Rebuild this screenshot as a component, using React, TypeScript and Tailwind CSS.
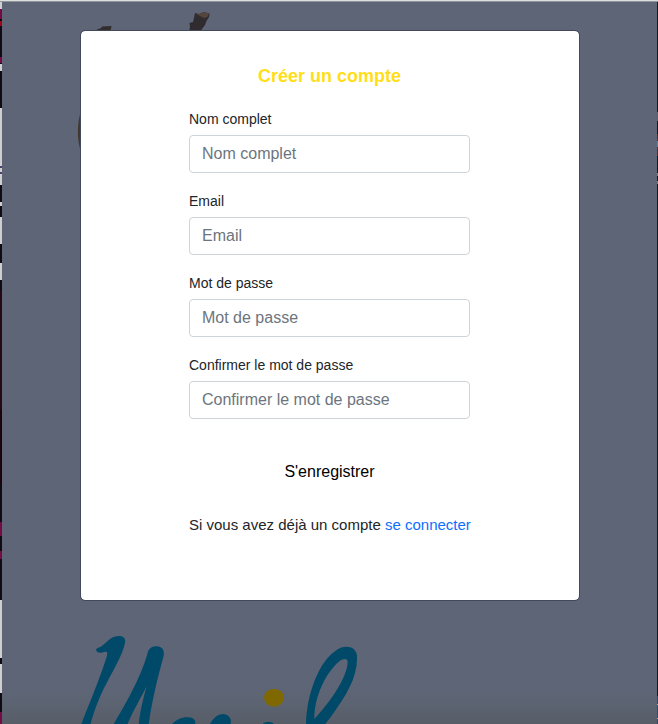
const fields = [
  { id: "name", label: "Nom complet", type: "text" },
  { id: "email", label: "Email", type: "email" },
  { id: "password", label: "Mot de passe", type: "password" },
  { id: "confirm", label: "Confirmer le mot de passe", type: "password" },
];

function Backdrop() {
  return (
    <svg className="absolute inset-0" width="658" height="724" viewBox="0 0 658 724" aria-hidden="true">
      <defs>
        <linearGradient id="shade" x1="0" y1="0" x2="0" y2="1">
          <stop offset="0" stopColor="#5b626c" stopOpacity="0" />
          <stop offset="1" stopColor="#575e68" />
        </linearGradient>
      </defs>
      <rect width="658" height="724" fill="#5e6577" />
      <rect y="685" width="658" height="39" fill="url(#shade)" />

      {/* antlers and body edge of the emblem */}
      <path d="M189 32 L190 27 L189.500 23 L193 22 L194 18 L195 13 L199 14 L204 12 L209.500 13.500 L209 17 L206.500 21 L205 25 L202 29 L200.500 32 Z" fill="#302b2e" />
      <path d="M196 14 L199 14 L204 12 L209 13.500 L207.500 17 L204 18 L200 16 Z" fill="#54463c" />
      <path d="M96 32 L97 29.500 L101 28 L102 26.500 L111.500 26 L111 29 L109 32 Z M114 32 L115 30 L123 30 L124 32 Z" fill="#332d2e" />
      <path d="M82 108 C77 120 76 141 82 154 Z" fill="#42382f" />

      {/* script lettering */}
      <g transform="translate(70 590) scale(.33333)">
        <g fill="#004968">
          <path d="M33 404 C60 336 89 266 109 204 C112 194 113 186 109 185 C100 184 94 191 84 187 C78 184 76 177 83 174 C106 168 117 138 146 138 C160 138 168 146 165 158 C158 198 118 258 91 318 C78 347 68 378 61 404 Z" />
          <path d="M130 404 C160 353 213 263 233 188 C237 173 248 169 260 169 C276 170 284 180 281 197 C264 260 246 330 236 404 L206 404 C210 365 220 323 230 289 C216 318 187 366 172 404 Z" />
          <path d="M304 404 C319 387 340 379 356 382 C371 383 379 392 375 404 Z" />
          <path d="M419 404 C430 381 447 372 460 372 C477 374 487 387 481 404 Z" />
          <path d="M578 404 C581 396 590 395 599 396 C607 397 611 399 612 404 Z" />
          <path fillRule="evenodd" d="M708 404 C710 315 745 215 800 180 C826 162 859 170 861 198 C864 260 830 314 785 377 L764 404 Z M733 387 C774 344 832 265 833 216 C833 204 820 205 808 214 C765 250 732 326 733 387 Z" />
        </g>
        <ellipse cx="612" cy="323" rx="30" ry="27" fill="#806800" />
      </g>

      {/* neighbouring content at the window edges */}
      <rect width="2" height="724" fill="#100b12" />
      <g fill="#cfcfd1">
        <rect width="2" height="9" />
        <rect y="64" width="2" height="7" />
        <rect y="108" width="2" height="77" />
        <rect y="202" width="2" height="4" />
        <rect y="217" width="2" height="27" />
        <rect y="263" width="2" height="17" />
        <rect y="600" width="2" height="58" />
        <rect y="664" width="2" height="29" />
      </g>
      <g fill="#750b43">
        <rect y="9" width="2" height="10" />
        <rect y="21" width="2" height="5" fill="#9b0712" />
        <rect y="57" width="2" height="6" />
        <rect y="522" width="2" height="14" />
        <rect y="551" width="2" height="8" />
        <rect y="712" width="2" height="12" />
      </g>
      <rect y="166" width="2" height="2" fill="#4c3d72" />
      <rect y="172" width="2" height="2" fill="#4c3d72" />
      <rect y="290" width="2" height="120" fill="#250815" />
      <rect y="410" width="2" height="74" fill="#1b030c" />
      <rect x="657" width="1" height="724" fill="#101820" />
      <g fill="#747b80">
        <rect x="657" y="112" width="1" height="9" fill="#596166" />
        <rect x="657" y="134" width="1" height="22" fill="#5e2b1a" />
        <rect x="657" y="141" width="1" height="6" />
        <rect x="657" y="173" width="1" height="3" />
        <rect x="657" y="181" width="1" height="3" />
      </g>
      <rect x="657" y="696" width="1" height="28" fill="#165486" />
      <rect x="657" y="704" width="1" height="1" fill="#a4b4c1" />
      <rect x="657" y="718" width="1" height="1" fill="#a4b4c1" />
      <rect width="658" height="1" fill="#dddede" />
      <rect y="1" width="658" height="1" fill="#8e959b" />
    </svg>
  );
}

export default function App() {
  return (
    <div className="relative h-[724px] w-[658px] overflow-hidden pl-20 pt-[30px] font-['Liberation_Sans',Arial,sans-serif] text-[#212529]">
      <Backdrop />
      <main className="relative h-[571px] w-[500px] rounded-[5px] border border-[#434958] bg-white bg-clip-padding pt-[31px] pr-[109px] pl-[108px]">
        <h1 className="text-center text-[18px] leading-7 font-bold text-[#ffde17]">Créer un compte</h1>
        <form>
          <div className="mt-[19px] flex flex-col gap-[18px]">
            {fields.map((field) => (
              <div key={field.id} className="flex flex-col">
                <label htmlFor={field.id} className="h-[26px] text-sm leading-[21px]">
                  {field.label}
                </label>
                <input
                  id={field.id}
                  type={field.type}
                  placeholder={field.label}
                  className="h-[38px] w-[281px] rounded-[4px] border border-[#ced4da] bg-white px-3 text-base placeholder:text-[#6c757d]"
                />
              </div>
            ))}
          </div>
          <button type="button" className="mx-auto mt-[34px] block h-[38px] text-base text-black">
            S'enregistrer
          </button>
        </form>
        <p className="mt-[22px] text-[15px] leading-6 whitespace-nowrap">
          Si vous avez déjà un compte{" "}
          <a href="#" className="text-[#0d6efd]">
            se connecter
          </a>
        </p>
      </main>
    </div>
  );
}
